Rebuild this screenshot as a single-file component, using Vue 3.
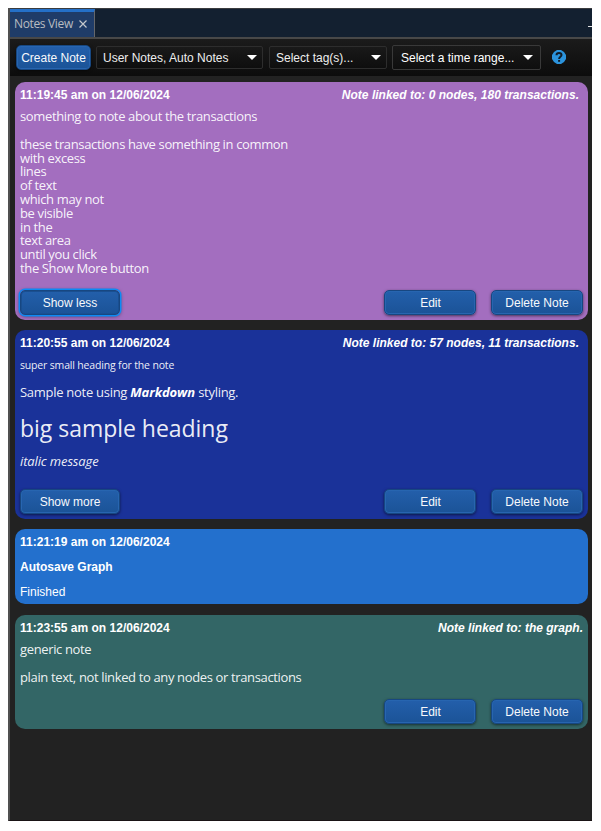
<script setup>
const notes = [
  {
    id: 'a', tone: 'purple', time: '11:19:45 am on 12/06/2024', link: 'Note linked to: 0 nodes, 180 transactions.', inset: true,
    toggle: 'Show less', focused: true, actions: true,
  },
  {
    id: 'b', tone: 'navy', time: '11:20:55 am on 12/06/2024', link: 'Note linked to: 57 nodes, 11 transactions.', inset: true,
    toggle: 'Show more', actions: true,
  },
  { id: 'c', tone: 'blue', time: '11:21:19 am on 12/06/2024' },
  { id: 'd', tone: 'green', time: '11:23:55 am on 12/06/2024', link: 'Note linked to: the graph.', actions: true },
]
const excess = ['with excess', 'lines', 'of text', 'which may not', 'be visible', 'in the', 'text area', 'until you click', 'the Show More button']
</script>

<template>
  <main class="window">
    <header class="tabs">
      <div class="tab">
        <span class="tab-title">Notes View</span>
        <svg class="close" viewBox="0 0 8 8"><path d="M.5.5l7 7M7.5.5l-7 7" /></svg>
      </div>
      <i class="minimise"></i>
    </header>
    <nav class="toolbar">
      <button class="btn create">Create Note</button>
      <div class="select types"><span>User Notes, Auto Notes</span><i class="arrow"></i></div>
      <div class="select tags"><span>Select tag(s)...</span><i class="arrow"></i></div>
      <div class="select range"><span>Select a time range...</span><i class="arrow"></i></div>
      <svg class="help" viewBox="0 0 14 14">
        <path class="disc" d="M5 0h4l3 2 2 3v4l-2 3-3 2H5l-3-2-2-3V5l2-3z" />
        <path class="hook" d="M4.5 5.2C4.5 3.6 5.5 2.9 7 2.9s2.5.8 2.5 2.1c0 1.8-2.4 1.7-2.4 3.9" />
        <path class="dot" d="M6.1 10h2v1.8h-2z" />
      </svg>
    </nav>
    <section class="notes">
      <article v-for="n in notes" :key="n.id" class="note" :class="n.tone">
        <div class="head">
          <span>{{ n.time }}</span>
          <em v-if="n.link" :class="{ inset: n.inset }">{{ n.link }}</em>
        </div>
        <div v-if="n.id === 'a'" class="body">
          <p class="l1">something to note about the transactions</p>
          <p>these transactions have something in common</p>
          <p v-for="line in excess" :key="line">{{ line }}</p>
        </div>
        <div v-else-if="n.id === 'b'" class="body md">
          <h6>super small heading for the note</h6>
          <p class="sample">Sample note using <b>Markdown</b> styling.</p>
          <h1>big sample heading</h1>
          <p class="italic">italic message</p>
        </div>
        <div v-else-if="n.id === 'c'" class="auto">
          <b>Autosave Graph</b>
          <span>Finished</span>
        </div>
        <div v-else class="body">
          <p class="l1">generic note</p>
          <p>plain text, not linked to any nodes or transactions</p>
        </div>
        <div v-if="n.actions" class="actions">
          <button v-if="n.toggle" class="btn toggle" :class="{ focused: n.focused }">{{ n.toggle }}</button>
          <button class="btn edit">Edit</button>
          <button class="btn del">Delete Note</button>
        </div>
      </article>
    </section>
  </main>
</template>

<style>
body { background: #fff; }
</style>

<style scoped>
* { box-sizing: border-box; }
.window {
  width: 584px; height: 813px; margin: 8px 0 0 8px; overflow: hidden;
  display: flex; flex-direction: column; background: #222;
  border-left: 2px solid #505050; border-bottom: 1px solid #191315;
  font: 12px "Liberation Sans", Arial, sans-serif; color: #fff;
}
.tabs {
  height: 31px; flex: none; display: flex; justify-content: space-between; align-items: flex-start;
  background: #132030; border-top: 1px solid #3a3c3e; border-bottom: 2px solid #484848; margin-left: -1px;
}
.tab {
  width: 86px; height: 28px; display: flex; align-items: center;
  padding: 0 0 2px 5px; gap: 6px; background: #1f3c68; border-top: 3px solid #2470c8; border-right: 1px solid #65676a;
  font: 12px "Open Sans", "Noto Sans", sans-serif; color: #b9bcc1;
}
.tab-title { letter-spacing: -0.35px; white-space: nowrap; }
.close { width: 8px; height: 8px; margin-top: 1px; fill: none; stroke: #c5c8cc; stroke-width: 1.2; }
.minimise { width: 4px; height: 1px; margin-top: 17px; background: #e4e4e4; }
.toolbar {
  height: 37px; flex: none; display: flex; align-items: center; padding-left: 6px;
  background: linear-gradient(#1b1b1b, #0c0c0c);
}
.btn {
  height: 25px; padding: 0; font: 12px "Liberation Sans", Arial, sans-serif; color: #f7f9fc;
  background: linear-gradient(#235fab, #1b5397); border: 1px solid #174781; border-radius: 5px;
  box-shadow: inset 0 0 0 1px #2765b0, 0 1px 3px rgba(0, 0, 0, .55);
}
.create { width: 75px; }
.select {
  height: 23px; display: flex; align-items: center; justify-content: space-between; padding: 0 6px;
  background: linear-gradient(#191919, #0e0e0e); border: 1px solid #2d2d2d; border-radius: 2px; color: #eee;
  white-space: nowrap;
}
.types { width: 167px; margin-left: 5px; }
.tags { width: 118px; margin-left: 6px; }
.range { width: 149px; height: 25px; margin-left: 5px; padding: 0 8px; border-color: #393939; color: #fff; }
.arrow { border: 4.5px solid transparent; border-width: 5px 5px 0; border-top-color: #fff; margin-right: -1px; }
.help { width: 14px; height: 14px; margin: -1px 0 0 11px; }
.disc { fill: #2b93dc; }
.hook { fill: none; stroke: #101c28; stroke-width: 2; }
.dot { fill: #101c28; }
.notes { display: flex; flex-direction: column; padding: 6px 4px 0 5px; gap: 10px; }
.note { border-radius: 10px; padding: 6px 5px 5px; display: flex; flex-direction: column; }
.purple { height: 238px; background: #a36ebf; }
.navy { height: 189px; padding-bottom: 5px; background: #1a3299; }
.blue { height: 75px; background: #2370cd; }
.green { height: 114px; background: #336666; margin-top: 1px; }
.head { display: flex; justify-content: space-between; height: 14px; line-height: 14px; font-weight: bold; letter-spacing: .01px; }
.inset { margin-right: 4px; }
.body {
  font: 13px/13.8px "Open Sans", "Noto Sans", sans-serif; letter-spacing: -0.36px; padding-top: 8px;
  white-space: nowrap; color: rgba(255, 255, 255, .93);
}
.body p, .body h1, .body h6 { margin: 0; }
.l1 { padding-bottom: 14px; }
.md h6 { font-size: 10.5px; font-weight: 400; line-height: 14px; letter-spacing: -0.17px; }
.md .sample { padding-top: 14px; letter-spacing: -0.28px; }
.md h1 { font-size: 23px; font-weight: 400; line-height: 30px; padding-top: 13px; letter-spacing: -0.03px; }
.md .italic { font-style: italic; padding-top: 12px; letter-spacing: -0.13px; }
.md b { font-style: italic; letter-spacing: -0.08px; color: #fff; }
.auto { display: flex; flex-direction: column; gap: 11px; line-height: 14px; padding-top: 11px; }
.actions { display: flex; margin-top: auto; justify-content: flex-end; }
.toggle { width: 100px; margin-right: auto; }
.focused { box-shadow: inset 0 0 0 1px #1a4f90, 0 0 0 1.5px #0d8bf5, 0 1px 4px rgba(0, 0, 0, .6); }
.edit { width: 92px; padding-left: 1px; }
.del { width: 92px; margin-left: 15px; }
</style>
